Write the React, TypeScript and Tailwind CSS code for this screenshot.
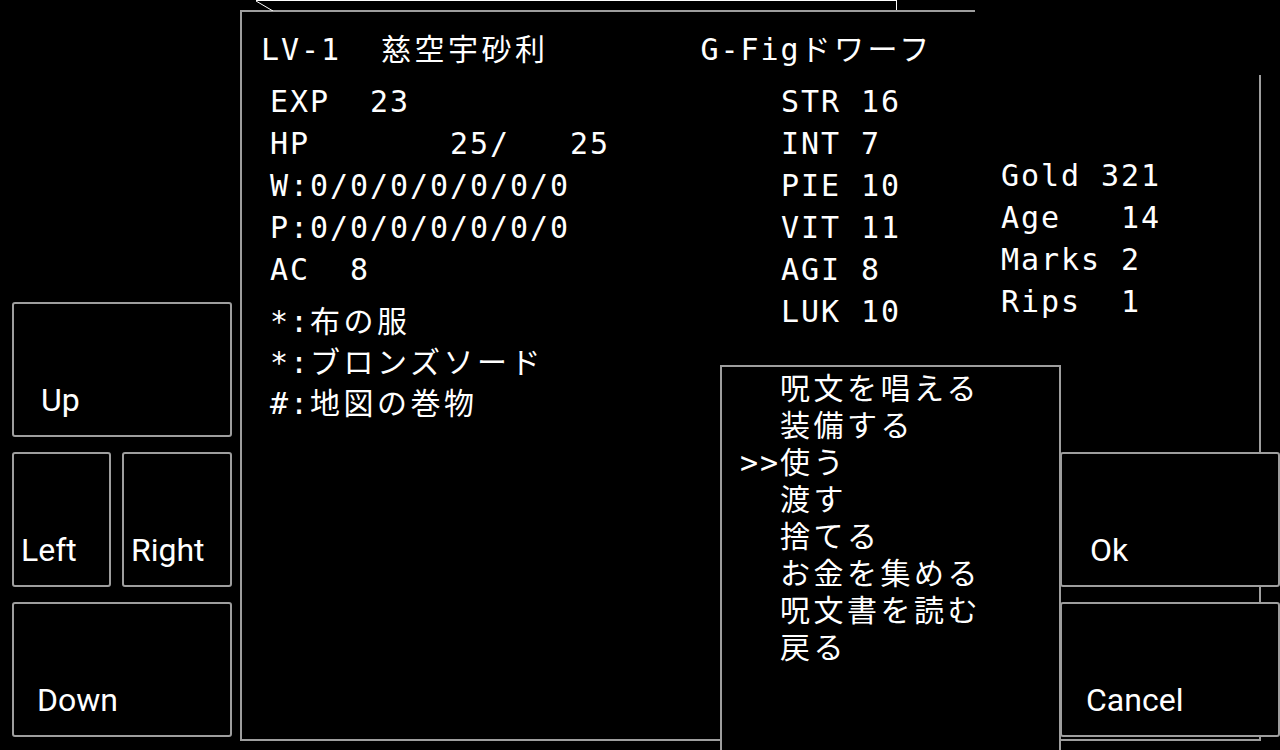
import React from 'react';

const mono = "font-['DejaVu_Sans_Mono','Noto_Sans_CJK_JP',monospace] text-[30px] tracking-[1.94px] text-white";
const line = 'h-[42px] leading-[42px] whitespace-pre';
const btn =
  "flex items-end rounded-[3px] border-2 border-[#9e9e9e] bg-black pb-[19px] font-['Roboto',sans-serif] text-[32px] leading-none text-white";

const stats = ['EXP  23', 'HP       25/   25', 'W:0/0/0/0/0/0/0', 'P:0/0/0/0/0/0/0', 'AC  8'];
const items = ['*:布の服', '*:ブロンズソード', '#:地図の巻物'];
const attrs = ['STR 16', 'INT 7', 'PIE 10', 'VIT 11', 'AGI 8', 'LUK 10'];
const info = ['Gold 321', 'Age   14', 'Marks 2', 'Rips  1'];
const menu = ['呪文を唱える', '装備する', '使う', '渡す', '捨てる', 'お金を集める', '呪文書を読む', '戻る'];
const cursor = 2;

// full-width runs sit on a slightly wider grid than the ascii ones
const Txt = ({ text }: { text: string }) => (
  <>
    {text.split(/([^\x00-\x7f]+)/).map((part, i) =>
      /[^\x00-\x7f]/.test(part) ? (
        <span key={i} className="tracking-[3.5px]">
          {part}
        </span>
      ) : (
        part
      ),
    )}
  </>
);

const App = () => {
  return (
    <div className="relative h-[750px] w-[1280px] overflow-hidden bg-black">
      <div className="flex h-full">
        {/* d-pad */}
        <div className="flex w-[240px] shrink-0 flex-col gap-[15px] pl-[12px] pt-[302px]">
          <div className={`${btn} h-[135px] w-[220px] pl-[27px]`}>Up</div>
          <div className="flex gap-[11px]">
            <div className={`${btn} h-[135px] w-[99px] pl-[7px]`}>Left</div>
            <div className={`${btn} h-[135px] w-[110px] pl-[7px]`}>Right</div>
          </div>
          <div className={`${btn} h-[135px] w-[220px] pl-[23px]`}>Down</div>
        </div>

        {/* status sheet */}
        <div className={`${mono} mt-[10px] h-[731px] w-[1021px] shrink-0 border-2 border-[#9e9e9e] bg-black pt-[17px]`}>
          <div className={`${line} pl-[19px]`}>
            <Txt text="LV-1  慈空宇砂利" />
            <span className="pl-[152px]">
              <Txt text="G-Figドワーフ" />
            </span>
          </div>
          <div className="mt-[10px] flex pl-[3px]">
            <div className="w-[536px] shrink-0 pl-[25px]">
              {stats.map((s) => (
                <div key={s} className={line}>{s}</div>
              ))}
              <div className="mt-[10px]">
                {items.map((s) => (
                  <div key={s} className="h-[41px] whitespace-pre leading-[41px]">
                    <Txt text={s} />
                  </div>
                ))}
              </div>
            </div>
            <div className="w-[220px] shrink-0">
              {attrs.map((s) => (
                <div key={s} className={line}>{s}</div>
              ))}
            </div>
            <div className="pt-[74px]">
              {info.map((s) => (
                <div key={s} className={line}>{s}</div>
              ))}
            </div>
          </div>
        </div>
      </div>

      {/* view peeking out above the sheet */}
      <div className="absolute left-[256px] top-0 h-[10px] w-[641px] border-r border-t border-white">
        <svg className="absolute left-0 top-0" width="18" height="10" viewBox="0 0 18 10">
          <line x1="0" y1="0" x2="17" y2="10" stroke="#ffffff" strokeWidth="1" />
        </svg>
      </div>
      <div className="absolute left-[975px] top-0 h-[75px] w-[305px] bg-black" />

      {/* command menu */}
      <div className={`${mono} absolute left-[720px] top-[365px] h-[400px] w-[341px] border-2 border-[#9e9e9e] bg-black pl-[18px] pt-[3px]`}>
        {menu.map((m, i) => (
          <div key={m} className="h-[37px] whitespace-pre leading-[37px]">
            {i === cursor ? '>>' : '  '}
            <Txt text={m} />
          </div>
        ))}
      </div>

      <div className={`${btn} absolute left-[1060px] top-[452px] h-[135px] w-[220px] pl-[28px]`}>Ok</div>
      <div className={`${btn} absolute left-[1060px] top-[602px] h-[135px] w-[220px] pl-[24px]`}>Cancel</div>
    </div>
  );
};

export default App;
